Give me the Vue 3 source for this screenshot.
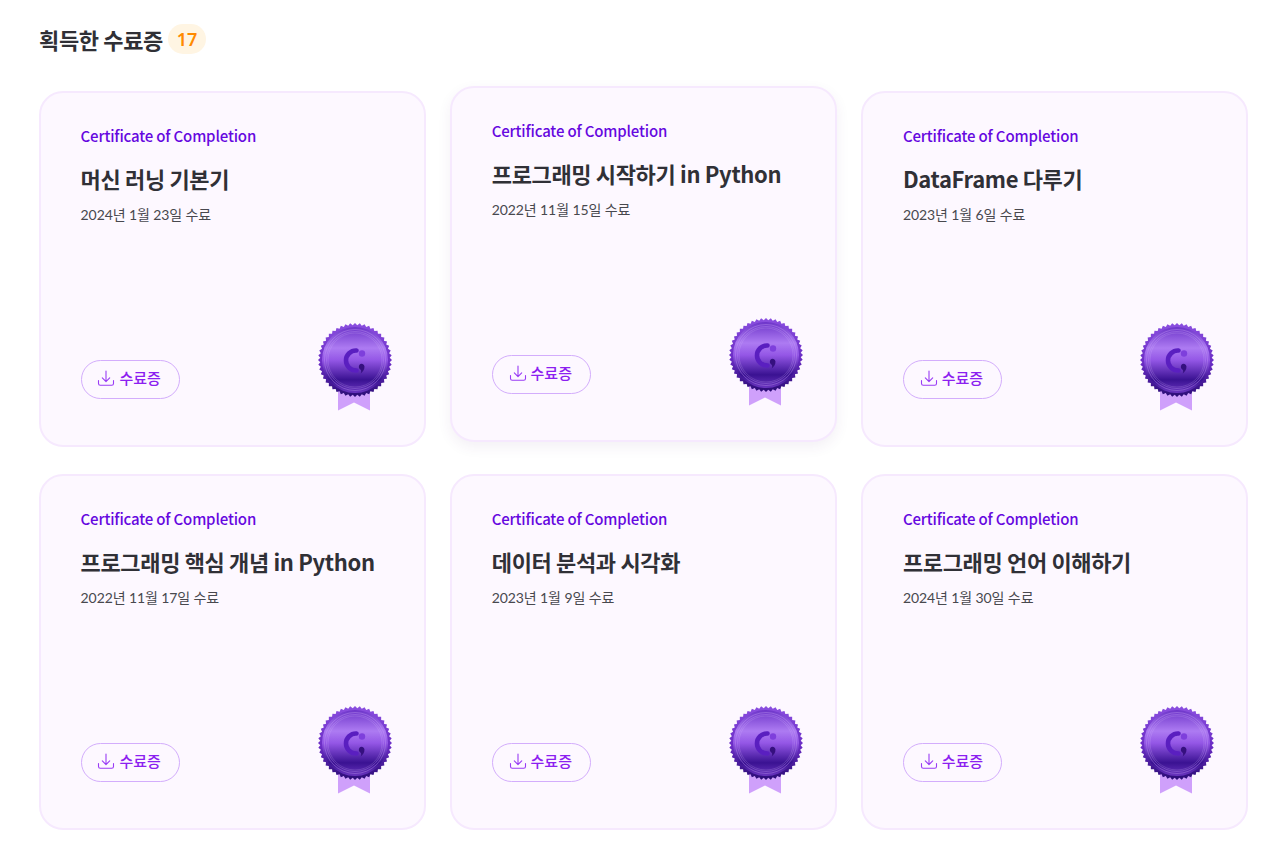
<script setup>
const certificates = [
  { title: '머신 러닝 기본기', date: '2024년 1월 23일 수료' },
  { title: '프로그래밍 시작하기 in Python', date: '2022년 11월 15일 수료', hover: true },
  { title: 'DataFrame 다루기', date: '2023년 1월 6일 수료' },
  { title: '프로그래밍 핵심 개념 in Python', date: '2022년 11월 17일 수료' },
  { title: '데이터 분석과 시각화', date: '2023년 1월 9일 수료' },
  { title: '프로그래밍 언어 이해하기', date: '2024년 1월 30일 수료' },
]
const teeth = 48
const sealPoints = Array.from({ length: teeth * 2 }, (_, i) => {
  const r = i % 2 ? 34.8 : 37
  const a = (i / (teeth * 2)) * Math.PI * 2
  return `${(37 + r * Math.cos(a)).toFixed(2)},${(37 + r * Math.sin(a)).toFixed(2)}`
}).join(' ')
</script>

<template>
  <main class="page">
    <h2 class="heading">
      <span>획득한 수료증</span>
      <span class="count">17</span>
    </h2>
    <section class="grid">
      <article v-for="c in certificates" :key="c.title" class="card" :class="{ raised: c.hover }">
        <p class="eyebrow">Certificate of Completion</p>
        <h3 class="title">{{ c.title }}</h3>
        <p class="date">{{ c.date }}</p>
        <div class="footer">
          <button class="download" type="button">
            <svg width="18" height="18" viewBox="0 0 18 18" fill="none" stroke="#9a3cf5" stroke-width="1.1" stroke-linecap="round" stroke-linejoin="round">
              <path d="M9 2v10.500M5.300 8.900 9 12.600l3.700-3.700" />
              <path d="M1.500 11.500v3A1.800 1.800 0 0 0 3.300 16.300h11.400a1.800 1.800 0 0 0 1.800-1.800v-3" />
            </svg>
            <span>수료증</span>
          </button>
          <svg class="medal" width="74" height="88" viewBox="0 0 74 88">
            <defs>
              <linearGradient id="edge" x1="0" y1="0" x2="0" y2="1">
                <stop offset="0" stop-color="#8b4fe0" />
                <stop offset="0.55" stop-color="#6a2cc4" />
                <stop offset="1" stop-color="#2a0c75" />
              </linearGradient>
              <linearGradient id="face" x1="0" y1="0" x2="0" y2="1">
                <stop offset="0" stop-color="#6d35c9" />
                <stop offset="0.32" stop-color="#ad7bf2" />
                <stop offset="0.5" stop-color="#9457e6" />
                <stop offset="0.8" stop-color="#3a1292" />
                <stop offset="1" stop-color="#6a35c0" />
              </linearGradient>
            </defs>
            <path d="M20 66h32v21.500L36 79.500 20 87.500z" fill="#cfa0fb" />
            <polygon :points="sealPoints" fill="url(#edge)" />
            <circle cx="37" cy="37" r="33" fill="url(#face)" />
            <circle cx="37" cy="37" r="30.500" fill="none" stroke="#c9a3f7" stroke-opacity="0.6" stroke-width="0.6" />
            <circle cx="37" cy="37" r="28.500" fill="none" stroke="#c9a3f7" stroke-opacity="0.5" stroke-width="0.6" />
            <circle cx="37" cy="37" r="27" fill="none" stroke="#e0c8ff" stroke-opacity="0.35" stroke-width="0.5" />
            <path d="M38.500 27.500A10 10 0 0 0 28 37.500c0 5.500 4.500 10 10.500 10" fill="none" stroke="#5a1fc0" stroke-width="4.600" stroke-linecap="round" />
            <circle cx="44" cy="30.500" r="3.200" fill="#7e3fdc" />
            <path d="M41.500 41.800a2.900 2.900 0 0 1 5 1.800c0 3-1.500 5.400-3.800 6.900 .7-1.900 .6-3.100-.1-3.800-1.800-.6-2.300-3.400-1.100-4.900z" fill="#35107f" />
          </svg>
        </div>
      </article>
    </section>
  </main>
</template>

<style>
html, body { background: #fff; }
</style>

<style scoped>
.page {
  box-sizing: border-box;
  width: 1272px;
  padding: 24px 23.500px 0 39px;
  font-family: "Noto Sans CJK KR", "Noto Sans", sans-serif;
  color: #2b2b2f;
}
.heading {
  display: flex;
  align-items: center;
  gap: 5px;
  height: 30px;
  margin: 0 0 37px;
  font-size: 22px;
  font-weight: 700;
  letter-spacing: -0.35px;
  color: #303036;
}
.count {
  display: flex;
  align-items: center;
  justify-content: center;
  width: 38px;
  height: 30px;
  border-radius: 15px;
  background: #fff5e3;
  color: #ff8a00;
  font-family: "Noto Sans", "Noto Sans CJK KR", sans-serif;
  font-size: 18px;
  font-weight: 600;
  letter-spacing: 0;
}
.grid {
  display: grid;
  grid-template-columns: repeat(3, 1fr);
  column-gap: 24px;
  row-gap: 27px;
}
.card {
  box-sizing: border-box;
  display: flex;
  flex-direction: column;
  height: 356px;
  padding: 31px 32px 0 39.600px;
  border: 2px solid #f6e9fe;
  border-radius: 24px;
  background: #fdf8ff;
}
.raised {
  transform: translateY(-5px);
  box-shadow: 0 5px 14px rgba(80, 40, 120, 0.07);
}
.eyebrow {
  margin: 0;
  height: 24px;
  font-size: 15px;
  line-height: 23px;
  font-weight: 500;
  letter-spacing: -0.16px;
  color: #6608e0;
}
.title {
  margin: 11px 0 0;
  height: 38px;
  font-size: 22px;
  line-height: 38px;
  font-weight: 700;
  letter-spacing: -0.35px;
  color: #303036;
  white-space: nowrap;
}
.date {
  margin: 7px 0 0;
  font-family: Lato, "Noto Sans CJK KR", sans-serif;
  font-size: 14px;
  line-height: 22px;
  letter-spacing: -0.1px;
  color: #48484e;
}
.footer {
  display: flex;
  justify-content: space-between;
  align-items: flex-end;
  margin-top: auto;
  padding-bottom: 36px;
  position: relative;
}
.download {
  display: flex;
  align-items: center;
  justify-content: center;
  gap: 4px;
  box-sizing: border-box;
  width: 99px;
  height: 39.500px;
  margin-bottom: 10px;
  padding: 0 2px 3px 0;
  border: 1px solid #d3adfc;
  border-radius: 20px;
  background: #fdf8ff;
  color: #8c20f0;
  font-family: "Noto Sans CJK KR", sans-serif;
  font-size: 15px;
  font-weight: 500;
}
.medal {
  position: absolute;
  right: 0;
  bottom: 34px;
}
</style>
